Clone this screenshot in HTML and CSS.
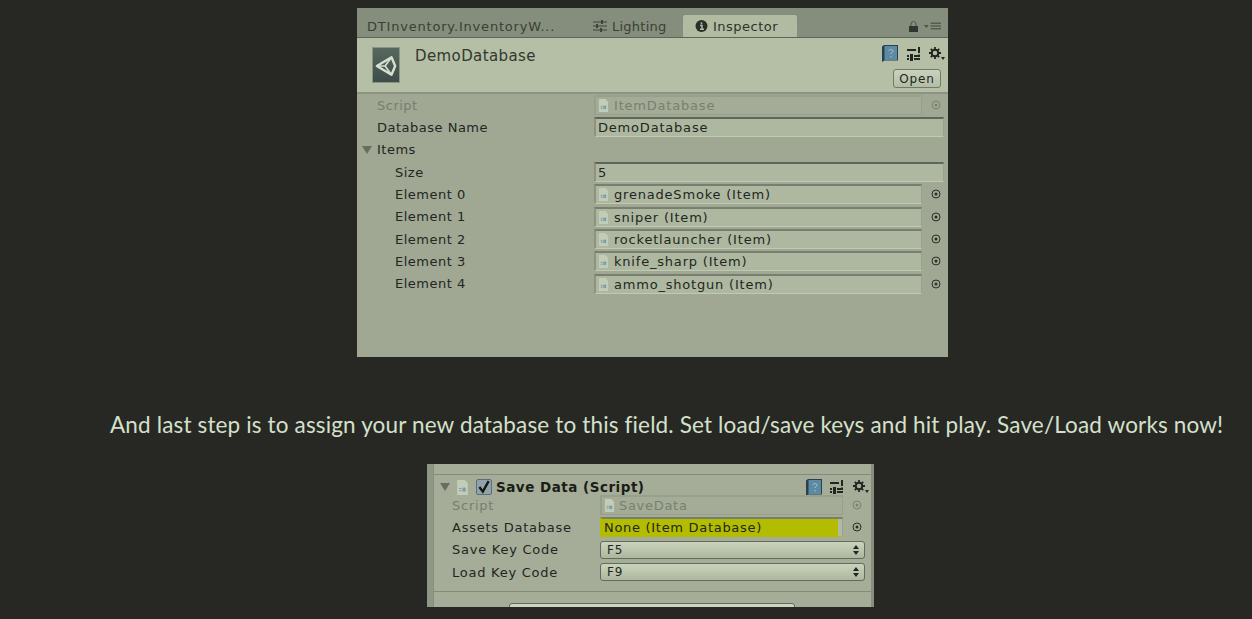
FILE: index.html
```html
<!DOCTYPE html>
<html lang="en">
<head>
<meta charset="utf-8">
<title>Save Data setup</title>
<link rel="stylesheet" href="styles.css">
</head>
<body>
<svg class="defs" width="0" height="0" aria-hidden="true">
  <symbol id="file" viewBox="0 0 12 14"><path d="M1 0h7l3 3v11H1z" fill="#c3cdb6"/><path d="M3 8h2M3 10h2M6.500 7v4M8 7v4M6 8.300h3M6 9.800h3" stroke="#6f97ae" stroke-width="1" fill="none"/></symbol>
  <symbol id="book" viewBox="0 0 16 17"><path d="M0 1.500l2-1.500h14v15.500H2.500L0 17z" fill="#27414f"/><rect x="2.500" y="1" width="12.500" height="14" fill="#5d8aa3"/><path d="M7 6c0-2 4-2 4 0 0 1.500-2 1.500-2 3M9 11v1.500" stroke="#a8c4d2" fill="none"/></symbol>
  <symbol id="sliders" viewBox="0 0 14 14"><path d="M0 3h9M0 9h2M7 9h6M0 12h2M7 12h6M12 0v6M12 7.500v2" stroke="#23261f" stroke-width="2" fill="none"/><rect x="3" y="7" width="3" height="7" fill="#23261f"/></symbol>
  <symbol id="gear" viewBox="0 0 17 14"><circle cx="7" cy="6" r="3.300" fill="none" stroke="#23261f" stroke-width="2"/><path d="M7 0v2.800M7 9.200V12M1 6h2.800M10.200 6H13M2.800 1.800l2 2M9.200 8.200l2 2M11.200 1.800l-2 2M4.800 8.200l-2 2" stroke="#23261f" stroke-width="1.800"/><path d="M13 10h4l-2 3z" fill="#23261f"/></symbol>
  <symbol id="pick" viewBox="0 0 10 10"><circle cx="5" cy="5" r="4" fill="none" stroke="currentColor"/><circle cx="5" cy="5" r="1.500" fill="currentColor"/></symbol>
  <symbol id="updown" viewBox="0 0 6 10"><path d="M3 0l3 4H0zM3 10l3-4H0z" fill="#23261f"/></symbol>
</svg>

<main class="page">
  <section class="inspector">
    <div class="tabs">
      <span class="tab tab-window">DTInventory.InventoryW...</span>
      <span class="tab tab-lighting">
        <svg class="tab-icon" viewBox="0 0 14 12"><path d="M0 2h14M0 6h14M0 10h14" stroke="#3f453a"/><path d="M9 0v4M4 4v4M8 8v4" stroke="#3f453a" stroke-width="2"/></svg>Lighting
      </span>
      <span class="tab tab-active">
        <svg class="tab-icon" viewBox="0 0 12 12"><circle cx="6" cy="6" r="6" fill="#2a2e27"/><path d="M6 2.200v2M4.600 5.500H6.500V9M4.500 9.300h4" stroke="#b0bba2" stroke-width="1.500" fill="none"/></svg>Inspector
      </span>
      <span class="tab-tools">
        <svg class="lock" viewBox="0 0 9 11"><path d="M2 5V3a2.500 2.500 0 0 1 5 0v2" fill="none" stroke="#4d5347"/><rect y="5" width="9" height="6" fill="#31352d"/></svg>
        <svg class="menu" viewBox="0 0 18 8"><path d="M0 3h5L2.500 6z" fill="#4d5347"/><path d="M7 1h11M7 4h11M7 7h11" stroke="#3b4036"/></svg>
      </span>
    </div>

    <header class="asset-head">
      <div class="asset-logo">
        <svg viewBox="0 0 24 24"><path d="M2 12L18 2.500 22 12l-4 9.500z" fill="none" stroke="#d8e0d0" stroke-width="2.600" stroke-linejoin="round"/><path d="M2 12h9l7-9.500M11 12l7 9.500" stroke="#d8e0d0" stroke-width="1.800" fill="none"/></svg>
      </div>
      <h1 class="asset-name">DemoDatabase</h1>
      <div class="asset-actions">
        <div class="head-icons">
          <svg class="ico-book"><use href="#book"/></svg>
          <svg class="ico-sliders"><use href="#sliders"/></svg>
          <svg class="ico-gear"><use href="#gear"/></svg>
        </div>
        <button class="open-btn" type="button">Open</button>
      </div>
    </header>

    <div class="props">
      <span class="label muted">Script</span>
      <span class="field obj muted-field"><svg class="file"><use href="#file"/></svg>ItemDatabase</span>
      <svg class="pick pick-muted"><use href="#pick"/></svg>

      <span class="label">Database Name</span>
      <span class="field text-field">DemoDatabase</span>

      <span class="label foldout"><i class="arrow"></i>Items</span>
      <span class="blank"></span>

      <span class="label sub">Size</span>
      <span class="field text-field">5</span>

      <span class="label sub">Element 0</span>
      <span class="field obj"><svg class="file"><use href="#file"/></svg>grenadeSmoke (Item)</span>
      <svg class="pick"><use href="#pick"/></svg>

      <span class="label sub">Element 1</span>
      <span class="field obj"><svg class="file"><use href="#file"/></svg>sniper (Item)</span>
      <svg class="pick"><use href="#pick"/></svg>

      <span class="label sub">Element 2</span>
      <span class="field obj"><svg class="file"><use href="#file"/></svg>rocketlauncher (Item)</span>
      <svg class="pick"><use href="#pick"/></svg>

      <span class="label sub">Element 3</span>
      <span class="field obj"><svg class="file"><use href="#file"/></svg>knife_sharp (Item)</span>
      <svg class="pick"><use href="#pick"/></svg>

      <span class="label sub">Element 4</span>
      <span class="field obj"><svg class="file"><use href="#file"/></svg>ammo_shotgun (Item)</span>
      <svg class="pick"><use href="#pick"/></svg>
    </div>
  </section>

  <p class="step">And last step is to assign your new database to this field. Set load/save keys and hit play. Save/Load works now!</p>

  <section class="component">
    <div class="comp-inner">
      <div class="comp-head">
        <i class="arrow"></i>
        <svg class="comp-file"><use href="#file"/></svg>
        <span class="check"><svg viewBox="0 0 12 12"><path d="M2 6l3 4 5-9" fill="none" stroke="#14170f" stroke-width="2"/></svg></span>
        <strong class="comp-title">Save Data (Script)</strong>
        <span class="comp-icons">
          <svg class="ico-book"><use href="#book"/></svg>
          <svg class="ico-sliders"><use href="#sliders"/></svg>
          <svg class="ico-gear"><use href="#gear"/></svg>
        </span>
      </div>
      <div class="comp-props">
        <span class="label muted">Script</span>
        <span class="field obj muted-field"><svg class="file"><use href="#file"/></svg>SaveData</span>
        <svg class="pick pick-muted"><use href="#pick"/></svg>

        <span class="label">Assets Database</span>
        <span class="field obj hilite">None (Item Database)</span>
        <svg class="pick"><use href="#pick"/></svg>

        <span class="label">Save Key Code</span>
        <span class="select">F5<svg class="updown"><use href="#updown"/></svg></span>

        <span class="label">Load Key Code</span>
        <span class="select">F9<svg class="updown"><use href="#updown"/></svg></span>
      </div>
      <div class="comp-foot"><span class="comp-btn"></span></div>
    </div>
  </section>
</main>
</body>
</html>
```

FILE: styles.css
```css
* { box-sizing: border-box; }

html, body { margin: 0; height: 100%; }

body {
  background: #272824;
  overflow: hidden;
  font-family: "DejaVu Sans", sans-serif;
  color: #23261f;
}

.defs { position: absolute; }

.page {
  display: flex;
  flex-direction: column;
  padding-top: 8px;
}

/* Inspector screenshot */
.inspector {
  width: 591px;
  height: 349px;
  margin-left: 357px;
  display: flex;
  flex-direction: column;
  background: #a0a893;
  font-size: 13px;
  letter-spacing: 0.5px;
}

.tabs {
  height: 30px;
  flex: none;
  display: flex;
  align-items: flex-end;
  padding-top: 7px;
  background: #858e7c;
  border-bottom: 1px solid #5e6558;
  color: #3a3f35;
}

.tab {
  height: 22px;
  display: flex;
  align-items: center;
  gap: 5px;
  white-space: nowrap;
}

.tab-window { width: 236px; padding-left: 10px; letter-spacing: 0.8px; }
.tab-lighting { width: 90px; letter-spacing: 0.25px; }
.tab-active {
  width: 114px;
  padding-left: 12px;
  background: #b0bba2;
  border-radius: 2px 2px 0 0;
  color: #2e322a;
}

.tab-icon { width: 13px; height: 12px; flex: none; }
.tab-lighting .tab-icon { width: 14px; }

.tab-tools {
  margin-left: auto;
  height: 22px;
  display: flex;
  align-items: center;
  gap: 6px;
  padding-right: 7px;
}

.lock { width: 9px; height: 11px; }
.menu { width: 17px; height: 8px; }

.asset-head {
  height: 56px;
  flex: none;
  display: flex;
  background: #b4bfa5;
  border-bottom: 2px solid #8c9482;
}

.asset-logo {
  width: 28px;
  height: 36px;
  margin: 9px 0 0 15px;
  padding: 6px 2px;
  background: linear-gradient(#57695f, #3d4c47);
  border: 1px solid #8a9685;
}

.asset-logo svg { display: block; width: 22px; height: 24px; }

.asset-name {
  margin: 7px 0 0 15px;
  font-size: 15px;
  font-weight: 400;
  line-height: 22px;
  letter-spacing: 0.4px;
  color: #33372f;
}

.asset-actions {
  margin-left: auto;
  padding: 7px 3px 0 0;
  display: flex;
  flex-direction: column;
  align-items: flex-end;
  gap: 7px;
}

.head-icons, .comp-icons { display: flex; align-items: center; gap: 7px; }
.head-icons .ico-book { margin-right: 2px; }

.ico-book { width: 16px; height: 17px; }
.ico-sliders { width: 14px; height: 14px; }
.ico-gear { width: 17px; height: 14px; }

.open-btn {
  width: 48px;
  height: 19px;
  margin-right: 4px;
  padding: 0;
  font: inherit;
  font-size: 12px;
  letter-spacing: 0.8px;
  color: #23261f;
  background: linear-gradient(#c9d3bb, #b3bda6);
  border: 1px solid #73796c;
  border-radius: 3px;
}

.props {
  display: grid;
  grid-template-columns: 237px 328px 26px;
  grid-auto-rows: 22.330px;
  align-items: center;
}

.label { padding-left: 20px; white-space: nowrap; }
.label.sub { padding-left: 38px; }
.muted { color: #777e6f; }

.foldout { position: relative; }
.arrow {
  display: inline-block;
  width: 0;
  height: 0;
  border: 5px solid transparent;
  border-top: 8px solid #676d60;
  border-bottom: 0;
}
.foldout .arrow { position: absolute; left: 5px; top: 4px; }

.field {
  height: 20px;
  display: flex;
  align-items: center;
  padding-left: 2px;
  background: #aeb8a0;
  border: 2px solid #6f7668;
  border-width: 2px 1px 1px 2px;
  border-color: #787f71 #9aa28d #c0c9b2 #8c9382;
  white-space: nowrap;
  overflow: hidden;
  letter-spacing: 0.8px;
}

.text-field { grid-column: 2 / 4; width: 350px; border-top-color: #5f6659; }
.blank { grid-column: 2 / 4; }
.muted-field { background: #a4ac97; color: #778070; border-color: #97a08b; }

.file { width: 11px; height: 13px; margin-right: 5px; flex: none; }

.pick {
  width: 10px;
  height: 10px;
  margin-left: 9px;
  color: #2b2e27;
}
.pick-muted { color: #7b8274; }

/* Paragraph */
.step {
  margin: 53px 0 0 110px;
  width: 1130px;
  font-family: "Lato", sans-serif;
  font-size: 22.500px;
  font-variant-ligatures: none;
  letter-spacing: 0.15px;
  line-height: 30px;
  color: #d5e0cb;
  white-space: nowrap;
}

/* Component screenshot */
.component {
  width: 447px;
  height: 143px;
  margin: 24px 0 0 427px;
  padding-left: 6px;
  background: #8f9786;
  font-size: 13px;
  letter-spacing: 0.75px;
  overflow: hidden;
}

.comp-inner {
  height: 100%;
  padding-top: 10px;
  background: #a5ad98;
  border-left: 1px solid #878e7e;
  border-right: 3px solid #878e7e;
  display: flex;
  flex-direction: column;
}

.comp-head {
  height: 24px;
  flex: none;
  display: flex;
  align-items: center;
  padding: 1px 2px 0 6px;
  border-top: 1px solid #848b7b;
}

.comp-head .arrow { margin-right: 6px; }
.comp-file { width: 13px; height: 15px; margin-right: 7px; flex: none; }

.check {
  width: 16px;
  height: 16px;
  margin-right: 4px;
  background: #90a3ac;
  border: 1px solid #5a6f7b;
  border-radius: 2px;
  flex: none;
}
.check svg { display: block; width: 14px; height: 14px; }

.comp-title {
  font-size: 13.500px;
  letter-spacing: 0.5px;
  color: #1b1d17;
}

.comp-icons { margin-left: auto; gap: 8px; }

.comp-props {
  display: grid;
  grid-template-columns: 166px 243px 23px;
  grid-auto-rows: 22.330px;
  align-items: center;
  margin-top: -4px;
}

.comp-props .label { padding-left: 18px; }

.comp-props .field { height: 20px; letter-spacing: 0.7px; }
.comp-props .file { margin-right: 4px; }

.hilite {
  background: linear-gradient(#b4bc00, #b4bc00) 0 0 / 236px 100% no-repeat #b0b9a2;
  color: #23261f;
  border-color: #787f71 #9aa28d #b4bc00 #b4bc00;
}

.select {
  grid-column: 2 / 4;
  width: 265px;
  height: 18px;
  display: flex;
  align-items: center;
  justify-content: space-between;
  padding: 0 5px 0 6px;
  font-size: 12px;
  background: linear-gradient(#cad4bc, #adb7a0);
  border: 1px solid #646a5d;
  border-radius: 3px;
}

.updown { width: 6px; height: 10px; flex: none; }

.comp-foot {
  flex: 1;
  margin-top: 8px;
  border-top: 1px solid #848b7b;
  padding-left: 75px;
}

.comp-btn {
  display: block;
  width: 286px;
  height: 8px;
  margin-top: 11px;
  background: #ccd6be;
  border: 1px solid #646a5d;
  border-radius: 3px;
}
```
